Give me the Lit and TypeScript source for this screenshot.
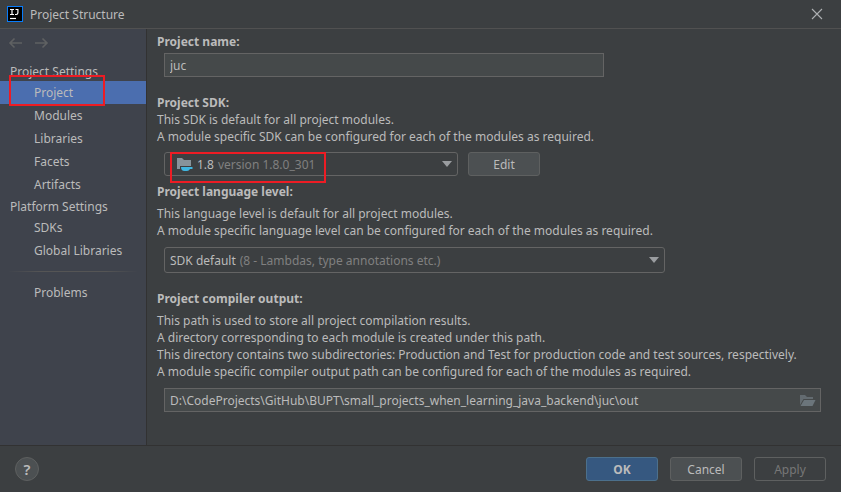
import { LitElement, html, css, svg } from "lit";
import { customElement, property } from "lit/decorators.js";
import { classMap } from "lit/directives/class-map.js";

const logo = html`<svg width="16" height="16" viewBox="0 0 16 16" aria-hidden="true">
  <rect x="0.5" y="0.5" width="15" height="15" fill="#000" stroke="#087cfa" />
  <path d="M3 3.5h4M5 3.5v5M3 8.5h4M8.5 3.5h3M10.9 3v3.800q0 1.700-1.600 1.700H8" fill="none" stroke="#fff" stroke-width="1.2" />
  <path d="M3 12.5h6" stroke="#fff" stroke-width="1.2" />
</svg>`;

const arrow = (d: string) => html`<svg width="14" height="12" viewBox="0 0 14 12" aria-hidden="true">
  ${svg`<path d=${d} fill="none" stroke="#5f6162" stroke-width="1.6" />`}
</svg>`;

const sdkIcon = html`<svg width="17" height="16" viewBox="0 0 17 16" aria-hidden="true">
  <path d="M1 2h5l2 2h7v6H4v3H1z" fill="#87939a" />
  <path d="M5 11h11.500v2H14q-1 2-3 2H8.500Q5 15 5 11z" fill="#40b6e0" />
</svg>`;

const openFolder = html`<svg width="16" height="13" viewBox="0 0 16 13" aria-hidden="true">
  <path d="M0 1h5l2 2h6v2H3.500L0 11z" fill="#636b70" />
  <path d="M4 6h11.500L12.500 12H.5z" fill="#6b757b" />
</svg>`;

const type = css`
  :host, button, input, select {
    font: 12px/17px "Noto Sans", "Open Sans", sans-serif;
    color: #bbbbbb;
  }
  button, input, select { box-sizing: border-box; margin: 0; }
`;

@customElement("settings-nav")
class SettingsNav extends LitElement {
  static styles = [type, css`
    :host { display: block; background: #3f434c; border-right: 1px solid #323232; box-sizing: border-box; }
    .history { display: flex; gap: 13px; padding: 8px 8px 12px; }
    .history button { display: flex; padding: 0; border: 0; background: none; }
    h2 { margin: 0; padding: 2px 10px 0; font-size: 12px; font-weight: 400; line-height: 18px; white-space: nowrap; }
    ul { margin: 0; padding: 0; list-style: none; }
    li { position: relative; }
    a { display: block; padding-left: 34px; line-height: 23px; color: inherit; text-decoration: none; white-space: nowrap; }
    .current { background: #4b6eaf; }
    .mark { position: absolute; left: 9px; top: -6px; width: 96px; height: 31px; box-sizing: border-box; border: 2px solid #ed1c24; pointer-events: none; }
    hr { height: 1px; margin: 9px 8px; border: 0; background: linear-gradient(90deg, transparent, #555555 25%, #555555 75%, transparent); }
  `];

  private list(items: string[]) {
    return html`<ul>${items.map((t) => html`<li>
      <a href="#" class=${classMap({ current: t === "Project" })}>${t}</a>
      ${t === "Project" ? html`<div class="mark"></div>` : ""}
    </li>`)}</ul>`;
  }

  render() {
    return html`
      <div class="history">
        <button disabled aria-label="Back">${arrow("M14 6H2M6.500 1.500 2 6l4.500 4.500")}</button>
        <button disabled aria-label="Forward">${arrow("M0 6h12M7.500 1.500 12 6l-4.500 4.500")}</button>
      </div>
      <nav>
        <h2>Project Settings</h2>
        ${this.list(["Project", "Modules", "Libraries", "Facets", "Artifacts"])}
        <h2>Platform Settings</h2>
        ${this.list(["SDKs", "Global Libraries"])}
        <hr />
        ${this.list(["Problems"])}
      </nav>`;
  }
}

@customElement("combo-field")
class ComboField extends LitElement {
  @property() name = "";
  @property() value = "";
  @property() detail = "";
  @property({ type: Boolean }) sdk = false;

  static styles = [type, css`
    :host { display: grid; position: relative; min-width: 0; }
    select, .shown { grid-area: 1 / 1; min-width: 0; }
    select { appearance: none; width: 100%; border: 1px solid #646464; border-radius: 3px; background: #3c3f41; color: transparent; }
    option { color: #bbbbbb; }
    .shown { display: flex; align-items: center; gap: 4px; padding: 0 6px; pointer-events: none; white-space: nowrap; z-index: 1; }
    .sdk { padding-left: 12px; }
    .detail { color: #808080; }
    .caret { margin-left: auto; }
    .mark { position: absolute; left: 6px; top: 0; width: 156px; height: 31px; box-sizing: border-box; border: 2px solid #ed1c24; pointer-events: none; z-index: 2; }
  `];

  render() {
    return html`
      <select aria-label=${this.name}><option>${this.value}</option></select>
      <div class="shown ${classMap({ sdk: this.sdk })}" aria-hidden="true">
        ${this.sdk ? sdkIcon : ""}
        <span>${this.value}</span><span class="detail">${this.detail}</span>
        <svg class="caret" width="10" height="6" viewBox="0 0 10 6"><path d="M0 0h10L5 6z" fill="#9a9da0" /></svg>
      </div>
      ${this.sdk ? html`<div class="mark"></div>` : ""}`;
  }
}

@customElement("project-page")
class ProjectPage extends LitElement {
  static styles = [type, css`
    :host { display: block; padding: 4px 20px 16px 10px; min-width: 0; }
    h3, p { margin: 0; font-size: 12px; line-height: 17px; }
    h3 { font-weight: 700; }
    h3 label { display: block; }
    p { white-space: nowrap; }
    section { margin-bottom: 17px; }
    .sdk { margin-bottom: 7px; }
    .text { padding-top: 5px; }
    .field { margin: 3px 0 0 7px; display: flex; gap: 10px; }
    .low { margin-top: 7px; }
    .level, .path { margin-top: 8px; }
    .level { height: 26px; }
    .name { max-width: 440px; }
    .half { flex: 0 1 294px; }
    .wide { flex: 0 1 501px; }
    input { width: 100%; height: 24px; padding: 0 5px; border: 1px solid #646464; background: #45494a; outline: none; }
    button { width: 72px; height: 24px; padding: 0; border: 1px solid #5e6060; border-radius: 3px; background: #4c5052; }
    .path { position: relative; }
    .path input { padding-right: 28px; }
    .path button { position: absolute; right: 4px; top: 4px; width: 18px; height: 16px; border: 0; background: none; display: grid; place-items: center; }
  `];

  render() {
    return html`
      <section>
        <h3><label for="name">Project name:</label></h3>
        <div class="field name"><input id="name" value="juc" /></div>
      </section>
      <section class="sdk">
        <h3>Project SDK:</h3>
        <p>This SDK is default for all project modules.</p>
        <p>A module specific SDK can be configured for each of the modules as required.</p>
        <div class="field low">
          <combo-field class="half" name="Project SDK" value="1.8" detail="version 1.8.0_301" sdk></combo-field>
          <button>Edit</button>
        </div>
      </section>
      <section>
        <h3>Project language level:</h3>
        <p class="text">This language level is default for all project modules.</p>
        <p>A module specific language level can be configured for each of the modules as required.</p>
        <div class="field level">
          <combo-field class="wide" name="Project language level" value="SDK default" detail="(8 - Lambdas, type annotations etc.)"></combo-field>
        </div>
      </section>
      <section>
        <h3><label for="out">Project compiler output:</label></h3>
        <p class="text">This path is used to store all project compilation results.</p>
        <p>A directory corresponding to each module is created under this path.</p>
        <p>This directory contains two subdirectories: Production and Test for production code and test sources, respectively.</p>
        <p>A module specific compiler output path can be configured for each of the modules as required.</p>
        <div class="field path">
          <input id="out" value="D:\\CodeProjects\\GitHub\\BUPT\\small_projects_when_learning_java_backend\\juc\\out" />
          <button aria-label="Browse">${openFolder}</button>
        </div>
      </section>`;
  }
}

@customElement("app-root")
class AppRoot extends LitElement {
  static styles = [type, css`
    :host { display: flex; flex-direction: column; min-height: 100vh; background: #3c3f41; }
    header { display: flex; align-items: center; gap: 7px; height: 28px; padding: 0 18px 0 7px; border-bottom: 1px solid #515151; }
    h1 { margin: 0; font-size: 12px; font-weight: 400; }
    header button { display: flex; margin-left: auto; padding: 0; border: 0; background: none; }
    main { flex: 1; display: grid; grid-template-columns: 147px minmax(0, 1fr); }
    footer { display: flex; align-items: center; gap: 12px; height: 46px; padding: 0 15px; border-top: 1px solid #323232; }
    footer button { width: 72px; height: 24px; padding: 0; border: 1px solid #5e6060; border-radius: 3px; background: #4c5052; }
    footer .help { width: 24px; border-radius: 50%; margin-right: auto; font-size: 15px; font-weight: 600; }
    footer .ok { background: #365880; border-color: #4c708c; font-weight: 700; }
    footer .apply { background: none; color: #777777; }
  `];

  render() {
    return html`
      <header>
        ${logo}
        <h1>Project Structure</h1>
        <button aria-label="Close"><svg width="12" height="12" viewBox="0 0 12 12"><path d="M1 1l10 10M11 1 1 11" stroke="#aeb0b2" stroke-width="1.1" /></svg></button>
      </header>
      <main><settings-nav></settings-nav><project-page></project-page></main>
      <footer>
        <button class="help" aria-label="Help">?</button>
        <button class="ok">OK</button>
        <button>Cancel</button>
        <button class="apply" disabled>Apply</button>
      </footer>`;
  }
}
